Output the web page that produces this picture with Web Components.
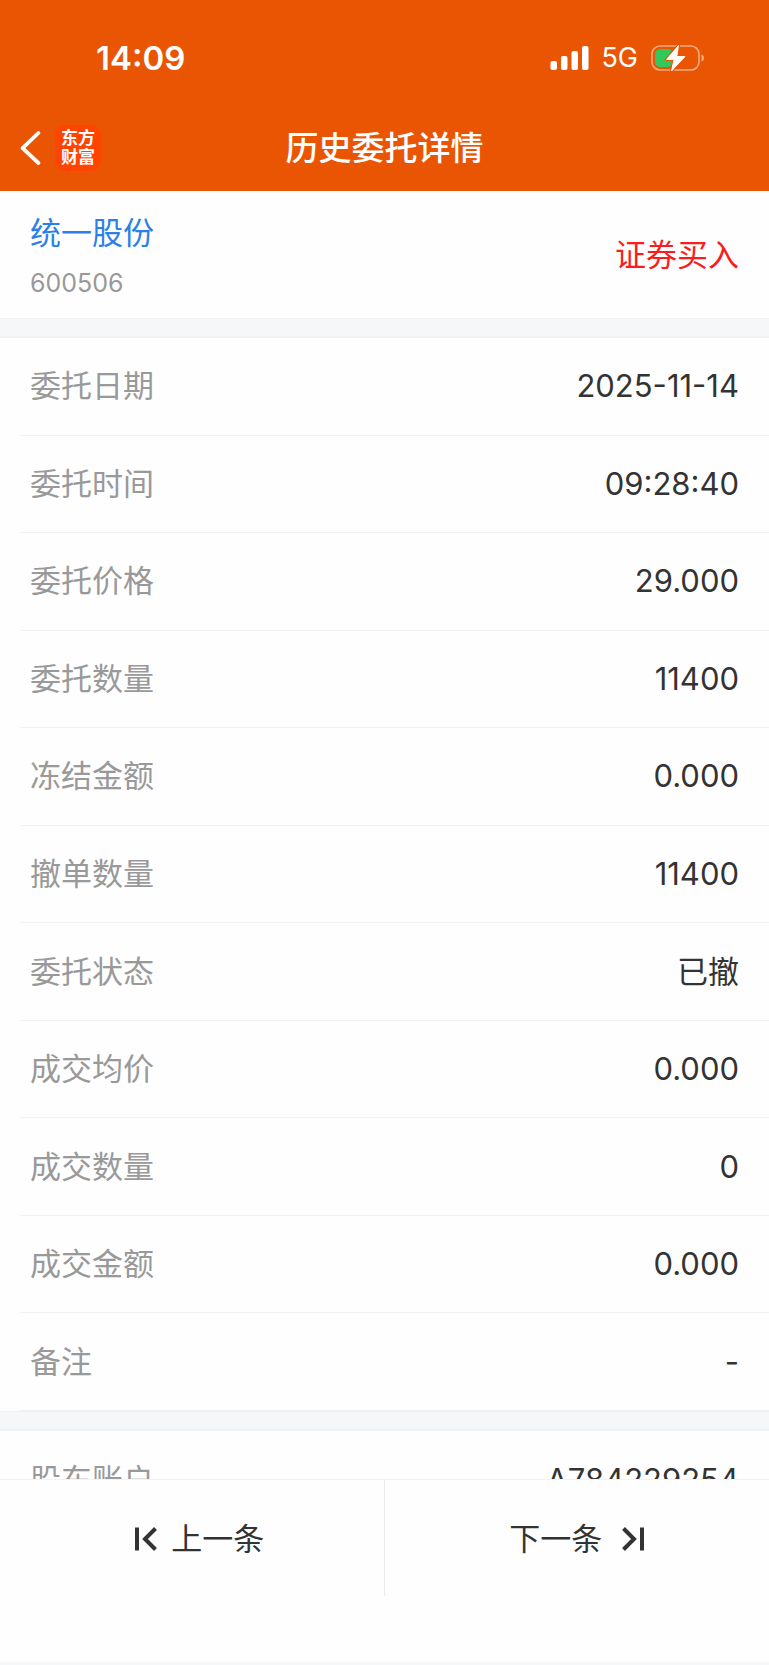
<!DOCTYPE html>
<html lang="zh-CN">
<head>
<meta charset="utf-8">
<meta name="viewport" content="width=device-width, initial-scale=1">
<title>历史委托详情</title>
<style>
    body {
        margin: 0;
        font-family: Inter, "Noto Sans CJK SC", sans-serif;
        font-size: 31px;
        line-height: 44px;
        color: #333;
        background: #f6f7f9;
    }
</style>
</head>
<body>
<order-page>
    <status-bar slot="top" network="5G">14:09</status-bar>
    <nav-bar slot="top">历史委托详情</nav-bar>

    <stock-summary code="600506" side="证券买入">统一股份</stock-summary>
    <section-gap></section-gap>
    <detail-list>
        <detail-row label="委托日期">2025-11-14</detail-row>
        <detail-row label="委托时间">09:28:40</detail-row>
        <detail-row label="委托价格">29.000</detail-row>
        <detail-row label="委托数量">11400</detail-row>
        <detail-row label="冻结金额">0.000</detail-row>
        <detail-row label="撤单数量">11400</detail-row>
        <detail-row label="委托状态">已撤</detail-row>
        <detail-row label="成交均价">0.000</detail-row>
        <detail-row label="成交数量">0</detail-row>
        <detail-row label="成交金额">0.000</detail-row>
        <detail-row label="备注">-</detail-row>
    </detail-list>
    <section-gap></section-gap>
    <detail-list peek>
        <detail-row label="股东账户">A784229254</detail-row>
    </detail-list>

    <pager-bar slot="bottom"></pager-bar>
</order-page>

<script>
// every element here is a template in an open shadow root
class BaseElement extends HTMLElement {
    constructor() {
        super();
        let template = document.createElement('template');
        template.innerHTML = this.render();
        this.attachShadow({mode: 'open'})
            .appendChild(template.content.cloneNode(true));
    }
}

customElements.define('order-page',
class extends BaseElement {
    render() {
        return `
        <style>
            :host {
                display: flex;
                flex-direction: column;
                height: 100vh;
            }
            header {
                background: #ea5503;
                color: #fff;
            }
            main {
                flex: 1;
                min-height: 0;
                display: flex;
                flex-direction: column;
                overflow: hidden;
                background: #fefefe;
            }
        </style>
        <header><slot name="top"></slot></header>
        <main><slot></slot></main>
        <slot name="bottom"></slot>
        `;
    }
})

customElements.define('status-bar',
class extends BaseElement {
    render() {
        return `
        <style>
            :host {
                display: flex;
                align-items: center;
                padding: 36px 64px 25px 96px;
            }
            .time {
                flex: 1;
                font-size: 33px;
                font-weight: 600;
            }
            .network {
                margin: 0 13px 0 12px;
                font-size: 27px;
            }
            svg { display: block; }
        </style>
        <span class="time"><slot></slot></span>
        <svg width="39" height="26" viewBox="0 0 39 26" fill="#fff">
            <rect x="0.5" y="16" width="6.500" height="9" rx="2"/>
            <rect x="11" y="11" width="6.500" height="14" rx="2"/>
            <rect x="21.500" y="6" width="6.500" height="19" rx="2"/>
            <rect x="32" y="1" width="6.500" height="24" rx="2"/>
        </svg>
        <span class="network">${this.getAttribute('network')}</span>
        <svg width="54" height="28" viewBox="0 0 54 28">
            <rect x="1" y="2" width="47" height="24" rx="8" fill="none" stroke="#f6aa80" stroke-width="1.6"/>
            <path d="M50.5 10.5c3.4 1 3.4 6 0 7z" fill="#f6aa80"/>
            <rect x="4" y="5" width="18" height="18" rx="5" fill="#34c759"/>
            <path d="M27.5 1.5 15.5 15.5h7.5L20.5 27 34 12.5h-8.2z" fill="#fff" stroke="#ea5503" stroke-width="3" stroke-linejoin="round" paint-order="stroke"/>
            <path d="M27.5 1.5 15.5 15.5h7.5L20.5 27 34 12.5h-8.2z" fill="#fff" stroke="#fff" stroke-width=".8" stroke-linejoin="round"/>
        </svg>
        `;
    }
})

customElements.define('nav-bar',
class extends BaseElement {
    render() {
        return `
        <style>
            :host {
                display: grid;
                grid-template-columns: 1fr auto 1fr;
                align-items: center;
                height: 86px;
            }
            .left {
                display: flex;
                align-items: center;
                gap: 14px;
                padding-left: 20px;
            }
            button {
                padding: 0;
                border: 0;
                background: none;
                color: inherit;
            }
            svg { display: block; }
            h1 {
                margin: 0;
                font-size: 33px;
                font-weight: 500;
            }
            .logo {
                box-sizing: border-box;
                width: 46px;
                height: 46px;
                padding: 4px 6px;
                border-radius: 10px;
                background: #ff4400;
                font-size: 17px;
                font-weight: 700;
                line-height: 19px;
            }
        </style>
        <div class="left">
            <button type="button" aria-label="返回">
                <svg width="21" height="36" viewBox="0 0 21 36" fill="none" stroke="#fff" stroke-width="3.8" stroke-linecap="round" stroke-linejoin="round">
                    <path d="M18.4 3 2.6 18.2 18.4 33"/>
                </svg>
            </button>
            <div class="logo">东方财富</div>
        </div>
        <h1><slot></slot></h1>
        `;
    }
})

customElements.define('stock-summary',
class extends BaseElement {
    render() {
        return `
        <style>
            :host {
                display: flex;
                justify-content: space-between;
                align-items: center;
                padding: 11px 30px;
            }
            .stock { padding-top: 5px; }
            .name {
                line-height: 52px;
                color: #2b7fe8;
            }
            .code {
                font-size: 25px;
                line-height: 48px;
                color: #999;
            }
            .side { color: #fb1c20; }
        </style>
        <div class="stock">
            <div class="name"><slot></slot></div>
            <div class="code">${this.getAttribute('code')}</div>
        </div>
        <div class="side">${this.getAttribute('side')}</div>
        `;
    }
})

customElements.define('section-gap',
class extends BaseElement {
    render() {
        return `
        <style>
            :host {
                flex: none;
                box-sizing: border-box;
                height: 20px;
                border: solid #f0f1f2;
                border-width: 1px 0 2px;
                background: #f6f7f9;
            }
        </style>
        `;
    }
})

customElements.define('detail-list',
class extends BaseElement {
    render() {
        return `
        <style>
            :host {
                flex: 1;
                display: grid;
                grid-auto-rows: 1fr;
            }
            /* only the top of the next section shows above the pager */
            :host([peek]) {
                flex: none;
                height: 48px;
                grid-auto-rows: 98px;
                overflow: hidden;
            }
        </style>
        <slot></slot>
        `;
    }
})

customElements.define('detail-row',
class extends BaseElement {
    render() {
        return `
        <style>
            :host {
                display: flex;
                justify-content: space-between;
                align-items: center;
                margin-left: 20px;
                padding: 0 30px 0 10px;
                border-bottom: 1px solid #f2f2f3;
            }
            .label { color: #999; }
        </style>
        <span class="label">${this.getAttribute('label')}</span>
        <span><slot></slot></span>
        `;
    }
})

customElements.define('pager-bar',
class extends BaseElement {
    render() {
        return `
        <style>
            :host {
                display: grid;
                grid-template-columns: 1fr 1fr;
                padding-bottom: 66px;
                border-top: 1px solid #f2f2f3;
                border-bottom: 3px solid #f6f7f9;
                background: #fefefe;
            }
            button {
                display: flex;
                justify-content: center;
                align-items: center;
                gap: 20px;
                height: 116px;
                padding: 2px 0 0;
                border: 0;
                background: none;
                font: inherit;
                color: inherit;
            }
            .prev {
                gap: 14px;
                padding-left: 16px;
                border-right: 1px solid #ebebec;
            }
            svg { display: block; }
        </style>
        <button type="button" class="prev">
            <svg width="22" height="24" viewBox="0 0 22 24" fill="none" stroke="#333" stroke-width="4">
                <path d="M2 .5v23M20.5 1.500 10 12l10.500 10.500"/>
            </svg>
            <span>上一条</span>
        </button>
        <button type="button" class="next">
            <span>下一条</span>
            <svg width="22" height="24" viewBox="0 0 22 24" fill="none" stroke="#333" stroke-width="4">
                <path d="M20 .5v23M1.500 1.500 12 12 1.500 22.500"/>
            </svg>
        </button>
        `;
    }
})
</script>
</body>
</html>
